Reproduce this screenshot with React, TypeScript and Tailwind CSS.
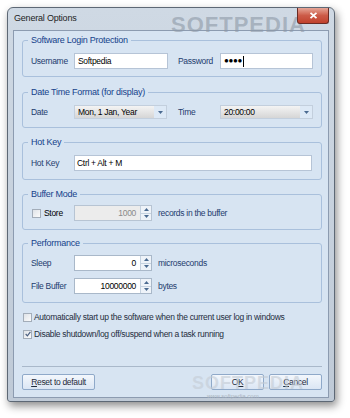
import React from "react";

const font = { fontFamily: '"Liberation Sans", Arial, sans-serif' };

function Group({ title, children, className = "" }: { title: string; children: React.ReactNode; className?: string }) {
  return (
    <fieldset className={`border border-[#a9c0dc] rounded-[3px] px-[7px] ${className}`}>
      <legend className="ml-[-2px] whitespace-nowrap px-[3px] text-[9px] leading-[13px] tracking-[-0.25px] text-[#15428b]">{title}</legend>
      {children}
    </fieldset>
  );
}

function Spin({ value, disabled }: { value: string; disabled?: boolean }) {
  return (
    <div className={`flex h-[16px] w-[78px] border ${disabled ? "border-[#b7c4d3] bg-[#ececec] text-[#8a8a8a]" : "border-[#a9b8c9] bg-white text-black"}`}>
      <div className="flex-1 pr-[4px] text-right leading-[14px]">{value}</div>
      <div className="flex w-[11px] flex-col border-l border-[#c5d2e0] bg-[#eef3f9]">
        <div className="flex flex-1 items-center justify-center border-b border-[#c5d2e0]">
          <svg width="5" height="3" viewBox="0 0 5 3"><path d="M0 3 L2.5 0 L5 3 Z" fill="#4a6a90" /></svg>
        </div>
        <div className="flex flex-1 items-center justify-center">
          <svg width="5" height="3" viewBox="0 0 5 3"><path d="M0 0 L2.5 3 L5 0 Z" fill="#4a6a90" /></svg>
        </div>
      </div>
    </div>
  );
}

function Combo({ value }: { value: string }) {
  return (
    <div className="flex h-[14px] w-[93px] border border-[#c3cfdd] bg-gradient-to-b from-[#f4f4f4] to-[#d6d6d6]">
      <div className="flex-1 whitespace-nowrap pl-[3px] leading-[12px] text-black">{value}</div>
      <div className="flex w-[12px] items-center justify-center bg-[#dde9f6]">
        <svg width="5" height="3" viewBox="0 0 5 3"><path d="M0 0 L2.5 3 L5 0 Z" fill="#4a6a90" /></svg>
      </div>
    </div>
  );
}

function Check({ checked }: { checked?: boolean }) {
  return (
    <div className="flex h-[9px] w-[9px] shrink-0 items-center justify-center border border-[#a3adb9] bg-gradient-to-br from-[#dfe3e8] to-[#fbfbfb]">
      {checked && (
        <svg width="6" height="6" viewBox="0 0 7 7">
          <path d="M0.8 3.5 L2.8 5.6 L6.3 1" stroke="#4a5f80" strokeWidth="1.4" fill="none" />
        </svg>
      )}
    </div>
  );
}

function Btn({ children, className = "" }: { children: React.ReactNode; className?: string }) {
  return (
    <div className={`flex h-[16px] items-center justify-center whitespace-nowrap rounded-[2px] border border-[#8fa9c9] bg-gradient-to-b from-[#f3f7fc] to-[#dbe6f4] text-[#1e2a3a] ${className}`}>
      {children}
    </div>
  );
}

export default function App() {
  return (
    <div className="h-[418px] w-[350px] overflow-hidden bg-white pl-[7px] pt-[7px] text-[8.5px] tracking-[-0.3px]" style={font}>
      <div className="flex h-[395px] w-[328px] flex-col rounded-t-[6px] rounded-b-[3px] border border-[#5d6875] bg-gradient-to-b from-[#cfd9e4] to-[#bfcad7] shadow-[2px_4px_9px_rgba(0,0,0,0.45)]">
        {/* title bar */}
        <div className="relative flex h-[22px] items-center">
          <span className="ml-[6px] text-[9px] tracking-[-0.2px] text-[#1d1d1d]">General Options</span>
          <span className="absolute left-[163px] top-[0px] text-[22px] font-bold tracking-[1px] text-[#8d98a6]/60">SOFTPEDIA</span>
          <div className="absolute right-[5px] top-0 flex h-[16px] w-[32px] items-center justify-center rounded-b-[3px] border border-t-0 border-[#6a2b24] bg-gradient-to-b from-[#e5a597] via-[#cc5b48] to-[#c1412c]">
            <svg width="9" height="7" viewBox="0 0 9 7">
              <path d="M1.5 0.8 L7.5 6.2 M7.5 0.8 L1.5 6.2" stroke="white" strokeWidth="1.8" />
            </svg>
          </div>
        </div>
        {/* client */}
        <div className="mx-[5px] flex h-[368px] flex-col border border-[#8c9bb0] bg-[#d7e4f2] pl-[8px] pr-[6px] pt-[3px]">
          <Group title="Software Login Protection" className="h-[43px]">
            <div className="mt-[6px] flex items-center whitespace-nowrap text-[#1e3c6e]">
              <span className="w-[44px] pl-[1px]">Username</span>
              <div className="h-[16px] w-[94px] border border-[#b6c4d6] bg-white pl-[3px] leading-[14px] text-black">Softpedia</div>
              <span className="ml-[10px] w-[42px]">Password</span>
              <div className="flex h-[16px] w-[93px] items-center border border-[#b6c4d6] bg-white pl-[3px] text-black">
                <span className="text-[8px] leading-[14px] tracking-[-0.3px]">●●●●</span>
                <span className="ml-[1px] h-[11px] w-[1px] bg-black" />
              </div>
            </div>
          </Group>
          <Group title="Date Time Format (for display)" className="mt-[9px] h-[42px]">
            <div className="mt-[6px] flex items-center whitespace-nowrap text-[#1e3c6e]">
              <span className="w-[44px] pl-[1px]">Date</span>
              <Combo value="Mon, 1 Jan, Year" />
              <span className="ml-[11px] w-[42px]">Time</span>
              <Combo value="20:00:00" />
            </div>
          </Group>
          <Group title="Hot Key" className="mt-[8px] h-[44px]">
            <div className="mt-[6px] flex items-center whitespace-nowrap text-[#1e3c6e]">
              <span className="w-[44px] pl-[1px]">Hot Key</span>
              <div className="h-[16px] w-[238px] border border-[#b6c4d6] bg-white pl-[2px] leading-[14px] text-black">Ctrl + Alt + M</div>
            </div>
          </Group>
          <Group title="Buffer Mode" className="mt-[8px] h-[42px]">
            <div className="mt-[4px] flex items-center whitespace-nowrap text-[#1e3c6e]">
              <div className="flex w-[44px] items-center pl-[2px]">
                <Check />
                <span className="ml-[3px] text-black">Store</span>
              </div>
              <Spin value="1000" disabled />
              <span className="ml-[6px]">records in the buffer</span>
            </div>
          </Group>
          <Group title="Performance" className="mt-[7px] h-[66px]">
            <div className="mt-[5px] flex items-center whitespace-nowrap text-[#1e3c6e]">
              <span className="w-[44px] pl-[1px]">Sleep</span>
              <Spin value="0" />
              <span className="ml-[6px]">microseconds</span>
            </div>
            <div className="mt-[7px] flex items-center whitespace-nowrap text-[#1e3c6e]">
              <span className="w-[44px] pl-[1px]">File Buffer</span>
              <Spin value="10000000" />
              <span className="ml-[6px]">bytes</span>
            </div>
          </Group>
          <div className="mt-[8px] flex h-[12px] items-center whitespace-nowrap pl-[1px] text-[#1f2d3d]">
            <Check />
            <span className="ml-[2px]">Automatically start up the software when the current user log in windows</span>
          </div>
          <div className="mt-[5px] flex h-[12px] items-center whitespace-nowrap pl-[1px] text-[#1f2d3d]">
            <Check checked />
            <span className="ml-[2px]">Disable shutdown/log off/suspend when a task running</span>
          </div>
          <div className="mt-[26px] h-px w-full bg-[#a9b8ca]" />
          <div className="relative mt-[7px] flex items-center">
            <Btn className="w-[73px]"><span><u>R</u>eset to default</span></Btn>
            <div className="flex-1" />
            <Btn className="w-[53px]"><span>O<u>K</u></span></Btn>
            <Btn className="ml-[5px] w-[53px]"><span><u>C</u>ancel</span></Btn>
            <span className="pointer-events-none absolute left-[170px] top-[0px] text-[18px] font-bold leading-[18px] tracking-[1px] text-[#c3cbd4]/60">SOFTPEDIA</span>
            <span className="pointer-events-none absolute left-[185px] top-[19px] text-[6px] leading-[6px] tracking-[0px] text-[#aab4c0]">www.softpedia.com</span>
          </div>
        </div>
      </div>
    </div>
  );
}
